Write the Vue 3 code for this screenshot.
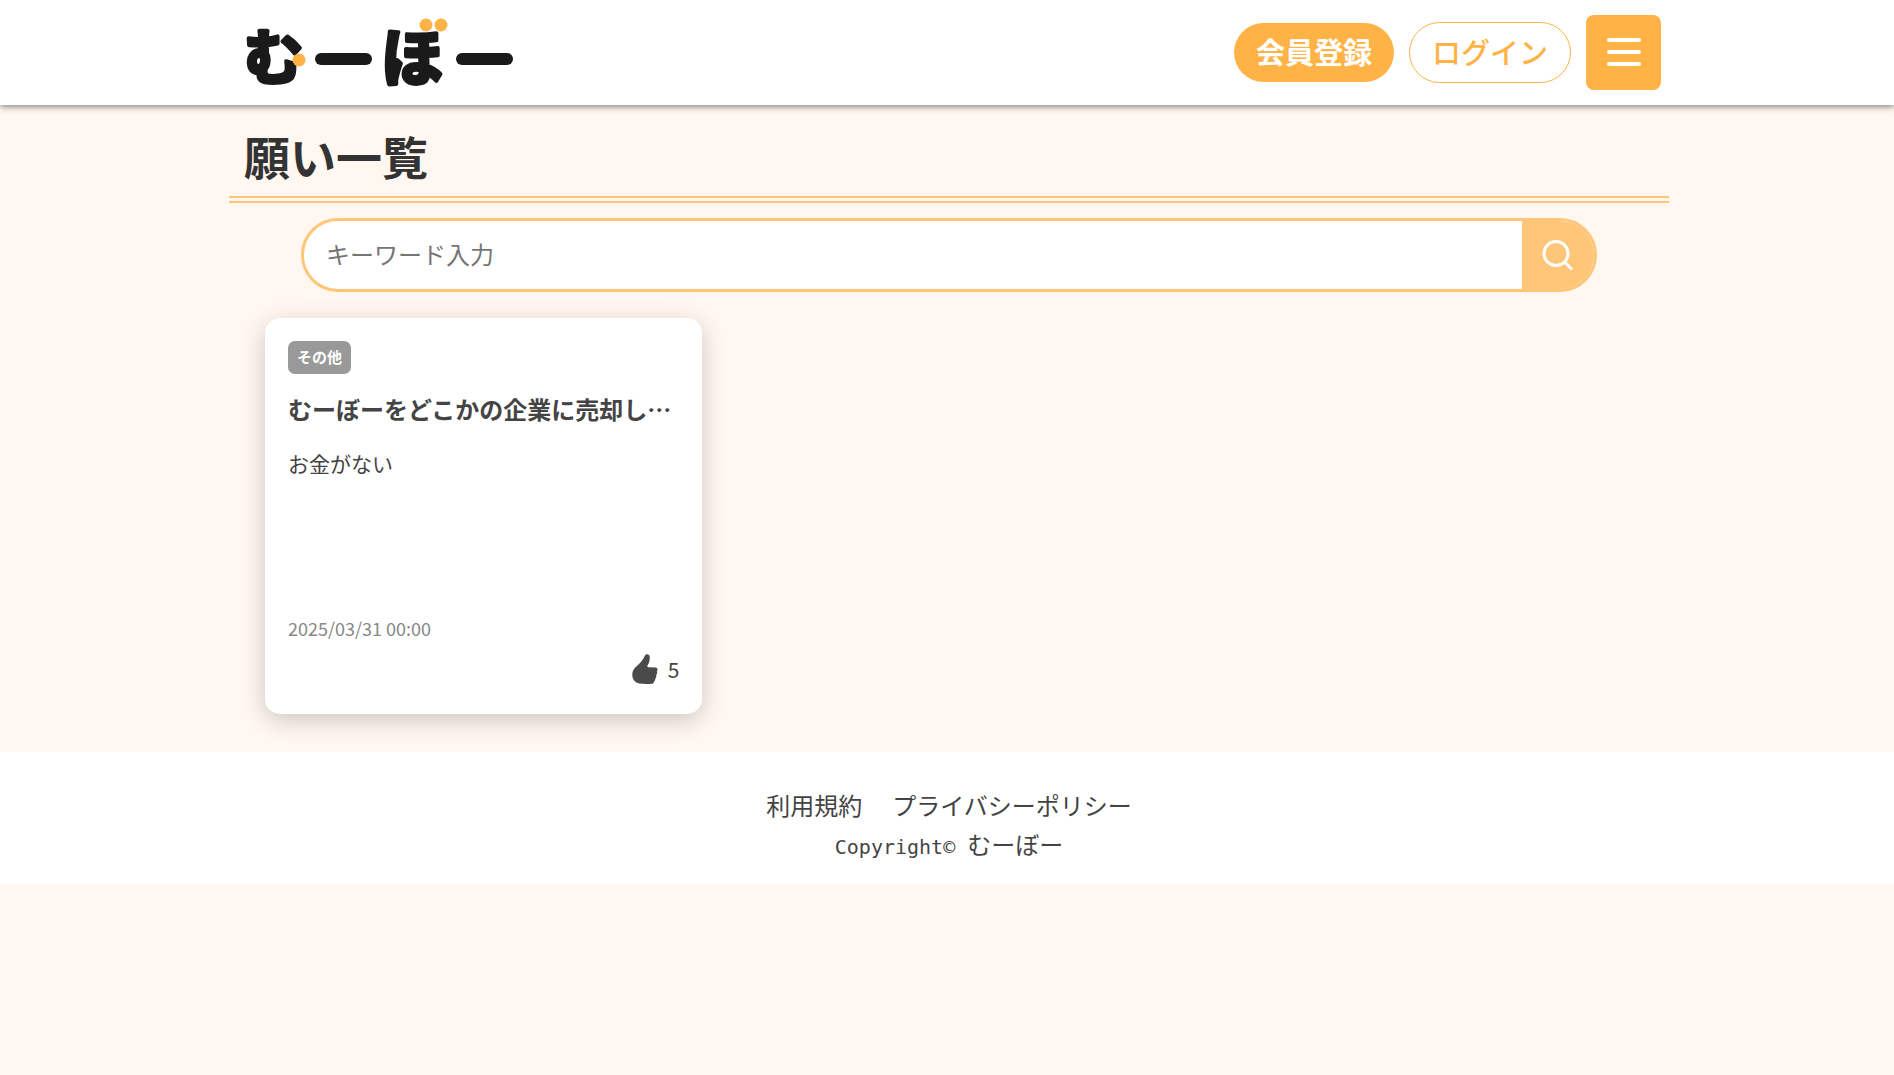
<script setup>
import { ref } from 'vue'

const keyword = ref('')

const wishes = ref([
  {
    id: 1,
    category: 'その他',
    title: 'むーぼーをどこかの企業に売却し…',
    body: 'お金がない',
    date: '2025/03/31 00:00',
    likes: 5
  }
])
</script>

<template>
  <div class="page">
    <header class="header">
      <div class="container header-inner">
        <a href="#" class="logo" aria-label="むーぼー">
          <svg width="272" height="75" viewBox="0 0 272 75">
            <g class="logo-text">
              <text x="0" y="64" font-size="59">む</text>
              <text x="137" y="66" font-size="62">ほ</text>
            </g>
            <g class="logo-bar">
              <line x1="77" y1="44" x2="122" y2="44" />
              <line x1="218" y1="44" x2="263" y2="44" />
            </g>
            <g class="logo-dot">
              <circle cx="55" cy="45" r="6.5" />
              <circle cx="182" cy="10" r="6.5" />
              <circle cx="197" cy="10" r="6.5" />
            </g>
          </svg>
        </a>
        <nav class="header-nav">
          <button type="button" class="btn btn-register">会員登録</button>
          <button type="button" class="btn btn-login">ログイン</button>
          <button type="button" class="btn-menu" aria-label="メニュー">
            <span></span>
            <span></span>
            <span></span>
          </button>
        </nav>
      </div>
    </header>

    <main class="container">
      <h1 class="heading">願い一覧</h1>

      <form class="search" @submit.prevent>
        <input v-model="keyword" type="text" placeholder="キーワード入力" aria-label="キーワード入力">
        <button type="submit" aria-label="検索">
          <svg width="32" height="32" viewBox="0 0 32 32">
            <circle cx="14" cy="14.5" r="12" />
            <path d="M22.5 23L30 30.5" />
          </svg>
        </button>
      </form>

      <div class="wish-list">
        <article v-for="wish in wishes" :key="wish.id" class="card">
          <span class="category">{{ wish.category }}</span>
          <h2 class="title">{{ wish.title }}</h2>
          <p class="body">{{ wish.body }}</p>
          <time class="date">{{ wish.date }}</time>
          <div class="likes">
            <svg width="26" height="30" viewBox="0 0 26 30">
              <path d="M13 1.6C14 -.3 17.300 -.2 17.700 2.500C18 6 17.200 8.500 15.500 11.500C15 12.700 15.600 13.300 16.800 13.300L23.500 13.500C25.800 13.700 26 16.200 24.800 17.300C25.500 18.600 25.200 20.300 24.100 21.100C24.600 22.500 24.100 24.200 23.200 24.800C23.400 26 22.800 27 22 27.400C22.200 28.800 21.500 29.500 20 29.700C16 30.100 11.500 30.100 7.500 29.500C2.800 28.700 .3 25 .3 21C.3 18.500 .8 16.500 2.500 14.500C4 12.500 5.800 11.200 7.500 9.500C10.200 6.800 11.600 4.600 13 1.600Z" />
            </svg>
            <span>{{ wish.likes }}</span>
          </div>
        </article>
      </div>
    </main>

    <footer class="footer">
      <div class="container">
        <div class="footer-links">
          <a href="#">利用規約</a>
          <a href="#">プライバシーポリシー</a>
        </div>
        <p class="copyright"><span>Copyright© </span>むーぼー</p>
      </div>
    </footer>
  </div>
</template>

<style>
body {
  background: #fff7f0;
}
</style>

<style scoped>
.page {
  padding-left: 4px;
  background: #fff7f0;
  color: #444;
  font-family: "Noto Sans CJK JP", sans-serif;
}

.page * {
  box-sizing: border-box;
}

.container {
  max-width: 1440px;
  margin: 0 auto;
}

button,
input {
  font-family: inherit;
}

button {
  cursor: pointer;
}

/* header */
.header {
  margin-left: -4px;
  padding-left: 4px;
  background: #fff;
  box-shadow: 0 2px 6px rgba(0, 0, 0, 0.45);
}

.header-inner {
  display: flex;
  align-items: center;
  justify-content: space-between;
  padding: 15px 8px 15px 15px;
}

.logo svg {
  display: block;
  overflow: visible;
}

.logo-text {
  fill: #1a1a1a;
  stroke: #1a1a1a;
  stroke-width: 4;
  stroke-linejoin: round;
  font-weight: 700;
}

.logo-bar {
  stroke: #1a1a1a;
  stroke-width: 12;
  stroke-linecap: round;
}

.logo-dot {
  fill: #ffb347;
}

.header-nav {
  display: flex;
  align-items: center;
  gap: 15px;
}

.btn {
  padding: 7px 22px 9px;
  border: none;
  border-radius: 32px;
  font-size: 29px;
  line-height: 43px;
}

.btn-register {
  background: #ffb347;
  color: #fff;
  font-weight: 700;
}

.btn-login {
  border: 1px solid #ffb347;
  background: #fff;
  color: #ffb347;
  font-weight: 500;
}

.btn-menu {
  display: flex;
  flex-direction: column;
  align-items: center;
  justify-content: center;
  gap: 8px;
  width: 75px;
  height: 75px;
  padding: 0 0 1px;
  border: none;
  border-radius: 8px;
  background: #ffb347;
}

.btn-menu span {
  width: 34px;
  height: 4px;
  border-radius: 2px;
  background: #fff;
}

/* list */
.heading {
  margin: 0;
  padding: 20px 15px 11px;
  border-bottom: 7px double #ffc67a;
  color: #333;
  font-size: 46px;
  font-weight: 700;
  line-height: 60px;
}

.search {
  display: flex;
  width: 90%;
  height: 74px;
  margin: 15px auto 26px;
  overflow: hidden;
  border: 3px solid #ffc67a;
  border-radius: 37px;
  background: #fff;
}

.search input {
  flex: 1;
  min-width: 0;
  padding: 0 22px 4px;
  border: none;
  outline: none;
  background: transparent;
  font-size: 24px;
}

.search input::placeholder {
  color: #757575;
}

.search button {
  display: flex;
  align-items: center;
  justify-content: center;
  width: 72px;
  padding: 0;
  border: none;
  background: #ffc67a;
}

.search svg {
  fill: none;
  stroke: #fff;
  stroke-width: 3;
}

.wish-list {
  display: grid;
  grid-template-columns: repeat(3, 1fr);
  gap: 28px;
  padding: 0 36px 38px;
}

.card {
  display: flex;
  flex-direction: column;
  align-items: flex-start;
  min-height: 396px;
  padding: 23px;
  border-radius: 15px;
  background: #fff;
  box-shadow: 0 6px 24px rgba(0, 0, 0, 0.2);
}

.category {
  padding: 0 9px 1px;
  border-radius: 7px;
  background: #999;
  color: #fff;
  font-size: 15px;
  font-weight: 700;
  line-height: 32px;
}

.title {
  max-width: 100%;
  margin: 17px 0 20px;
  overflow: hidden;
  font-size: 24px;
  font-weight: 700;
  line-height: 36px;
  white-space: nowrap;
  text-overflow: ellipsis;
}

.body {
  flex: 1;
  margin: 0;
  font-size: 21px;
  line-height: 32px;
}

.date {
  color: #888;
  font-size: 18px;
  line-height: 28px;
}

.likes {
  display: flex;
  align-items: center;
  align-self: flex-end;
  gap: 10px;
  padding: 11px 0 6px;
  font-size: 21px;
  line-height: 32px;
}

.likes svg {
  fill: #4a4a4a;
}

/* footer */
.footer {
  margin-left: -4px;
  padding: 33px 0 21px 4px;
  background: #fff;
  font-size: 24px;
  line-height: 39px;
  text-align: center;
}

.footer-links {
  display: flex;
  justify-content: center;
  gap: 30px;
}

.footer a {
  color: inherit;
  text-decoration: none;
}

.copyright {
  margin: 0;
}

.copyright span {
  font-family: "DejaVu Sans Mono", monospace;
  font-size: 20px;
  line-height: 20px;
}
</style>
